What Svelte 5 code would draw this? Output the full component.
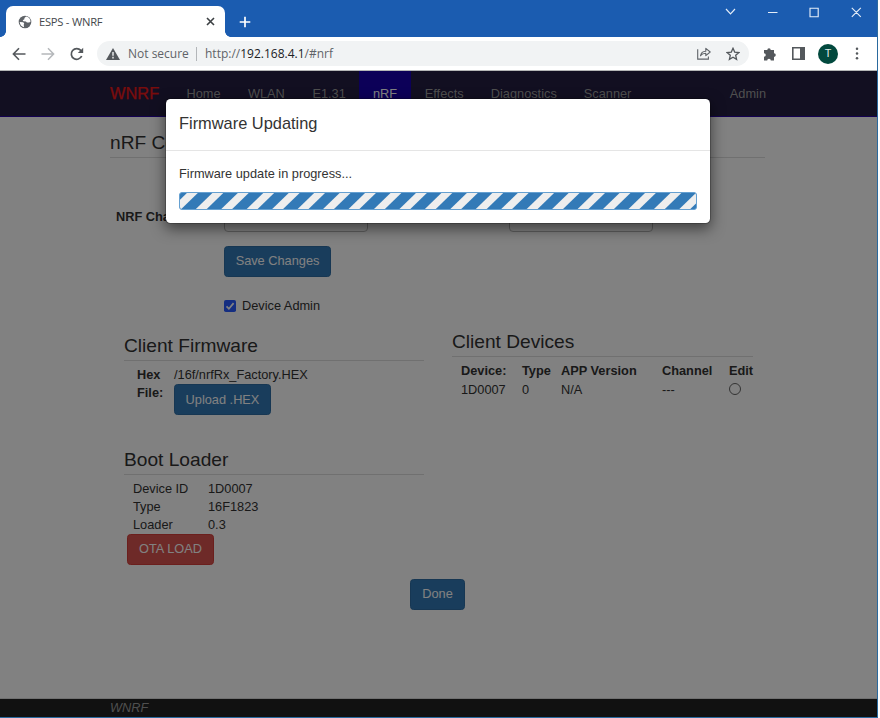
<script>
  const nav = [
    { t: 'Home', w: 61.4 }, { t: 'WLAN', w: 64.5 }, { t: 'E1.31', w: 60.6 },
    { t: 'nRF', w: 51.8, active: true }, { t: 'Effects', w: 66 },
    { t: 'Diagnostics', w: 93 }, { t: 'Scanner', w: 76 }
  ];
  const boot = [['Device ID', '1D0007'], ['Type', '16F1823'], ['Loader', '0.3']];
  const stripes = Array.from({ length: 21 }, (_, i) => -9.6 + 25.45 * i);
</script>

<div class="window">
  <header class="chrome">
    <div class="tabs">
      <div class="tab">
        <svg class="globe" width="14" height="14" viewBox="0 0 14 14"><circle cx="7" cy="7" r="6.3" fill="#5f6368"/><path d="M8.1 1.6 6.4 3v1.3L4.7 5.2l.7 1.1 2.5.1 1 1.1 2.4.1 1.3-1.1C12.3 3.7 10.5 2 8.1 1.6ZM1.7 7.1l3.5.2 1 1.2-.5 1.3.4 2.4C3.6 11.9 1.8 9.6 1.7 7.1Z" fill="#fff"/></svg>
        <span>ESPS - WNRF</span>
        <svg class="close" width="9" height="9" viewBox="0 0 9 9"><path d="m1 1 7 7M8 1 1 8" stroke="#3c4043" stroke-width="1.6"/></svg>
        <i class="flare flare-start"></i><i class="flare flare-end"></i>
      </div>
      <svg class="plus" width="12" height="12" viewBox="0 0 12 12"><path d="M6 .7v10.6M.7 6h10.6" stroke="#fff" stroke-width="1.7"/></svg>
      <svg class="controls" width="134" height="14" viewBox="0 0 134 14" fill="none" stroke="#e4edf8" stroke-width="1.15"><path d="m1 4 4.5 5L10 4M43 7.5h9.5"/><path d="M85 3.2h8.2v8.5H85zM126.8 2.8l9 9m0-9-9 9"/></svg>
    </div>
    <div class="toolbar">
      <svg width="14" height="14" viewBox="0 0 14 14" fill="none" stroke="#54585c" stroke-width="1.6"><path d="M13.5 7H1.8M7 1.3 1.4 7 7 12.7"/></svg>
      <svg class="fwd" width="14" height="14" viewBox="0 0 14 14" fill="none" stroke="#b5b8bb" stroke-width="1.5"><path d="M.5 7h11.7M7 1.3 12.6 7 7 12.7"/></svg>
      <svg class="reload" width="14" height="14" viewBox="0 0 14 14"><path d="M11.7 9A5.4 5.4 0 1 1 10.8 3.4L12.4 5" fill="none" stroke="#54585c" stroke-width="1.7"/><path d="M13.2.7v5.4H7.8z" fill="#54585c"/></svg>
      <div class="address">
        <svg width="14" height="12" viewBox="0 0 14 12"><path d="M7 0 14 12H0z" fill="#54585c"/><path d="M7 4v3.7M7 8.8v1.6" stroke="#f1f3f4" stroke-width="1.4"/></svg>
        <span class="insecure">Not secure</span><i class="sep"></i>
        <span class="url">http://<b>192.168.4.1</b>/#nrf</span>
        <svg class="share" width="14" height="13" viewBox="0 0 14 13" fill="none" stroke="#5f6368" stroke-width="1.1"><path d="M.7 2.2v9.9h10.7V9.4"/><path d="M3.5 8.8C4 5.7 5.8 4.3 8.8 4.2V1.4L13.2 5 8.8 8.7V6.2C6.3 6.2 4.8 7 3.5 8.8Z" stroke-linejoin="round"/></svg>
        <svg class="star" width="14" height="14" viewBox="0 0 14 14"><path d="m7 1.3 1.7 3.8 4.2.4-3.2 2.8.9 4.1L7 10.2l-3.6 2.2.9-4.1-3.2-2.8 4.2-.4Z" fill="none" stroke="#54585c" stroke-width="1.3"/></svg>
      </div>
      <svg class="puzzle" width="14" height="14" viewBox="0 0 14 14"><path d="M1 3h3.3a1.7 1.7 0 0 1 3.4 0H11v3.3a1.8 1.8 0 0 1 0 3.6v3.6H7.8a1.8 1.8 0 0 0-3.6 0H1V9.8a1.8 1.8 0 0 0 0-3.6Z" fill="#54585c"/></svg>
      <svg class="panel" width="13" height="13" viewBox="0 0 13 13"><path d="M.8.8h11.4v11.4H.8z" fill="#fff" stroke="#54585c" stroke-width="1.6"/><path d="M8 0h5v13H8z" fill="#54585c"/></svg>
      <div class="avatar">T</div>
      <svg class="dots" width="4" height="13" viewBox="0 0 4 13" fill="#54585c"><circle cx="2" cy="1.7" r="1.25"/><circle cx="2" cy="6.5" r="1.25"/><circle cx="2" cy="11.3" r="1.25"/></svg>
    </div>
  </header>

  <main class="page">
    <nav>
      <div class="brand">WNRF</div>
      {#each nav as n}
        <div class="item" class:active={n.active} style="width:{n.w}px">{n.t}</div>
      {/each}
      <div class="admin">Admin</div>
    </nav>
    <div class="content">
      <h2 class="title">nRF Config</h2>
      <div class="fields">
        <label for="chan">NRF Channel</label>
        <div class="input" id="chan"></div><div class="input second"></div>
      </div>
      <button class="save">Save Changes</button>
      <div class="check">
        <svg width="12" height="12" viewBox="0 0 12 12"><rect width="12" height="12" rx="1.8" fill="#2a5cff"/><path d="m2.5 6.3 2.4 2.4 4.7-5.6" fill="none" stroke="#fff" stroke-width="1.7"/></svg>
        <span>Device Admin</span>
      </div>
      <div class="columns">
        <section class="firmware">
          <h3>Client Firmware</h3>
          <div class="hex"><strong>Hex File:</strong><div><span>/16f/nrfRx_Factory.HEX</span><button>Upload .HEX</button></div></div>
          <h3 class="boot">Boot Loader</h3>
          <div class="info">
            {#each boot as [k, v]}<div><span>{k}</span><span>{v}</span></div>{/each}
          </div>
          <button class="danger">OTA LOAD</button>
        </section>
        <section class="devices">
          <h3>Client Devices</h3>
          <div class="grid head"><span>Device:</span><span>Type</span><span>APP Version</span><span>Channel</span><span>Edit</span></div>
          <div class="grid"><span>1D0007</span><span>0</span><span>N/A</span><span>---</span><i class="radio"></i></div>
        </section>
      </div>
      <div class="done"><button>Done</button></div>
    </div>
    <footer>WNRF</footer>
    <div class="backdrop">
      <div class="modal">
        <div class="mhead">Firmware Updating</div>
        <div class="mbody">
          <p>Firmware update in progress...</p>
          <div class="bar">
            <svg width="516" height="16" viewBox="0 0 516 16">
              {#each stripes as x}<polygon points="{x},16 {x + 10.9},16 {x + 27.4},0 {x + 16.5},0" fill="#eee"/>{/each}
            </svg>
          </div>
        </div>
      </div>
    </div>
  </main>
</div>

<style>
  :global(body) { margin: 0; background: #fff; }
  * { box-sizing: border-box; }
  svg { display: block; flex: none; }
  .window { width: 878px; height: 718px; border-right: 1px solid #2a6a9e; border-bottom: 1px solid #2a6a9e; overflow: hidden; display: flex; flex-direction: column; font-family: "Liberation Sans", Arial, sans-serif; }
  .chrome { height: 71px; flex: none; border-bottom: 1px solid #b4b6b6; background: #fff; font-family: "Open Sans", "Noto Sans", sans-serif; }
  .tabs { height: 37px; background: #1b5cb0; display: flex; padding: 6px 0 0 6px; margin-right: -1px; }
  .tab { position: relative; width: 219px; height: 31px; background: #fff; border-radius: 7px 7px 0 0; display: flex; align-items: center; padding: 0 10px 0 12px; font-size: 11.2px; letter-spacing: -.25px; color: #45494d; }
  .tab span { margin-left: 7px; flex: 1; }
  .flare { position: absolute; bottom: 0; width: 6px; height: 6px; }
  .flare-start { left: -6px; background: radial-gradient(circle at 0 0, #1b5cb0 5.6px, #fff 6.2px); }
  .flare-end { right: -6px; background: radial-gradient(circle at 100% 0, #1b5cb0 5.6px, #fff 6.2px); }
  .plus { margin: 10px 0 0 14px; }
  .controls { margin: -1px 0 0 474px; overflow: visible; }
  .toolbar { height: 33px; display: flex; align-items: center; padding-left: 12px; }
  .fwd { margin-left: 15px; }
  .reload { margin-left: 15px; }
  .address { margin-left: 13px; width: 652px; height: 25px; border-radius: 13px; background: #f1f3f4; display: flex; align-items: center; padding: 0 9px; color: #5f6368; white-space: nowrap; }
  .insecure { margin-left: 8px; width: 60px; font-size: 12px; }
  .sep { width: 1px; height: 14px; background: #b3b6b9; margin: 0 8px; }
  .url { font-size: 12px; flex: 1; }
  .url b { font-weight: 400; color: #202124; }
  .share { margin-right: 15px; }
  .puzzle { margin-left: 14px; }
  .panel { margin-left: 15px; }
  .avatar { margin-left: 13px; width: 20px; height: 20px; border-radius: 50%; background: #02493e; color: #dfeae7; font: 11px/20px Roboto, sans-serif; text-align: center; }
  .dots { margin-left: 17px; }
  .page { position: relative; flex: 1; min-height: 0; background: #fff; display: flex; flex-direction: column; font-size: 12.77px; line-height: 18.24px; color: #333; }
  nav { height: 46px; flex: none; background: #241e42; border-bottom: 1px solid #2600a0; display: flex; line-height: 45px; padding: 0 111px 0 110px; color: #9d9d9d; }
  .brand { width: 62.5px; font-size: 16.4px; color: #f01818; -webkit-text-stroke: .25px #f01818; }
  .item { padding-left: 14px; }
  .item.active { background: #1900ae; color: #fff; }
  .admin { margin-left: auto; }
  .content { width: 655px; margin-left: 110px; display: flex; flex-direction: column; flex: 1; min-height: 0; }
  h2, h3 { margin: 0; font-size: 19.15px; font-weight: 400; line-height: 28px; height: 29px; border-bottom: 1px solid #ddd; flex: none; }
  h2.title { margin-top: 12px; }
  .fields { display: flex; margin: 43px 0 0 6px; height: 31px; }
  .fields label { width: 108px; font-weight: 700; line-height: 31px; }
  .input { width: 144px; height: 31px; border: 1px solid #bbb; border-radius: 4px; }
  .second { margin-left: 141px; }
  button { display: block; height: 31px; padding: 0 10.9px; border: 1px solid #2e6da4; border-radius: 3.6px; background: #337ab7; color: #fff; font: inherit; }
  .save { margin: 13.5px 0 0 114px; width: 107px; padding: 0; }
  .check { display: flex; align-items: center; height: 18px; margin: 20.5px 0 0 114px; gap: 6px; }
  .columns { display: flex; margin-top: 17px; padding-left: 14px; height: 247px; }
  .firmware { width: 300px; }
  .devices { width: 301px; margin: -4px 0 0 28px; }
  .hex { display: flex; padding: 5px 0 0 13px; line-height: 18px; }
  .hex strong { width: 37px; padding-right: 5px; }
  .hex button { width: 97px; padding: 0; }
  .boot { margin-top: 31px; }
  .info { padding: 5px 0 0 9px; line-height: 18px; }
  .info div { display: grid; grid-template-columns: 75px 1fr; }
  .danger { background: #d9534f; border-color: #d43f3a; margin-left: 3px; width: 87px; padding: 0; }
  .grid { display: grid; grid-template-columns: 61px 39px 101px 67px 30px; margin-left: 9px; line-height: 18px; margin-bottom: 1px; white-space: nowrap; }
  .head { margin-top: 5px; font-weight: 700; }
  .radio { width: 12px; height: 12px; border: 1px solid #666; border-radius: 50%; margin-top: 2px; }
  .done { display: flex; justify-content: center; }
  footer { height: 19px; flex: none; background: #222; border-top: 1px solid #ddd; padding-left: 110px; font-style: italic; color: #9d9d9d; line-height: 18px; }
  .backdrop { position: absolute; inset: 0; background: rgba(0,0,0,.495); padding: 27px 0 0 165px; }
  .modal { width: 546px; height: 126px; background: #fff; border: 1px solid rgba(0,0,0,.2); border-radius: 5.5px; box-shadow: 0 5px 14px rgba(0,0,0,.5); background-clip: padding-box; }
  .mhead { height: 52px; padding: 0 13px; font-size: 16.4px; line-height: 49px; border-bottom: 1px solid #e5e5e5; }
  .mbody { padding: 14px 13px; }
  .mbody p { margin: 0; }
  .bar { margin-top: 9px; height: 18px; border: 1px solid #65a0d1; border-radius: 3px; background: #337ab7; overflow: hidden; }
</style>
